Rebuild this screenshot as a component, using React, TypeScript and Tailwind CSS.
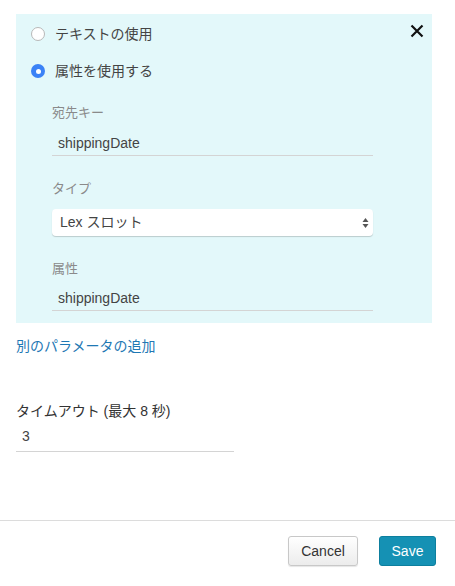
import React, { useState } from "react";

const font = { fontFamily: '"Liberation Sans", "Noto Sans CJK JP", sans-serif' };

function Radio({ checked }: { checked: boolean }) {
  return checked ? (
    <span className="flex h-[14px] w-[14px] items-center justify-center rounded-full bg-[#3b82f6]">
      <span className="h-[5px] w-[5px] rounded-full bg-white" />
    </span>
  ) : (
    <span className="h-[14px] w-[14px] rounded-full border border-[#b8b8b8] bg-white" />
  );
}

function Field({ label, value, gap }: { label: string; value: string; gap: string }) {
  return (
    <div className="flex flex-col">
      <span className="text-[13px] leading-[16px] text-[#8a8a8a]">{label}</span>
      <div className={`${gap} border-b border-[#d4d4d4] pb-[3px] pl-[6px] text-[14px] leading-[17px] text-[#444]`}>
        {value}
      </div>
    </div>
  );
}

export default function App() {
  const [mode, setMode] = useState<"text" | "attr">("attr");

  return (
    <div className="flex h-[586px] w-[455px] flex-col bg-white" style={font}>
      <div className="flex-1 px-4 pt-[14px]">
        <div className="relative w-[416px] bg-[#e3f8fa] pb-[12px] pl-[36px] pr-[59px] pt-[13px]">
          <button className="absolute right-[8px] top-[10px] text-[#111]">
            <svg width="14" height="14" viewBox="0 0 14 14" stroke="currentColor" strokeWidth="2.2">
              <path d="M1.5 1.5l11 11M12.5 1.5l-11 11" />
            </svg>
          </button>
          <div className="-ml-[21px] flex flex-col gap-[23px]">
            <label className="flex items-center gap-[10px] text-[14px] leading-[14px] text-[#444]" onClick={() => setMode("text")}>
              <Radio checked={mode === "text"} />
              テキストの使用
            </label>
            <label className="flex items-center gap-[10px] text-[14px] leading-[14px] text-[#444]" onClick={() => setMode("attr")}>
              <Radio checked={mode === "attr"} />
              属性を使用する
            </label>
          </div>
          <div className="mt-[27px] flex flex-col">
            <Field label="宛先キー" value="shippingDate" gap="mt-[14px]" />
            <span className="mt-[25px] text-[13px] leading-[16px] text-[#8a8a8a]">タイプ</span>
            <div className="mt-[12px] flex h-[27px] items-center justify-between rounded-[4px] bg-white pl-[8px] pr-[4px] text-[14px] text-[#444] shadow-[0_1px_1px_rgba(0,0,0,0.18)]">
              <span>Lex スロット</span>
              <svg width="7" height="12" viewBox="0 0 7 12" fill="#555">
                <path d="M3.5 1L6.5 5H0.5Z" />
                <path d="M3.5 11L6.5 7H0.5Z" />
              </svg>
            </div>
            <div className="mt-[25px]">
              <Field label="属性" value="shippingDate" gap="mt-[13px]" />
            </div>
          </div>
        </div>
        <a className="mt-[15px] block text-[14px] leading-[17px] text-[#1f78b4]" href="#">
          別のパラメータの追加
        </a>
        <div className="mt-[48px] text-[14px] leading-[17px] text-[#333]">タイムアウト (最大 8 秒)</div>
        <div className="mt-[8px] w-[218px] border-b border-[#d4d4d4] pb-[6px] pl-[6px] text-[14px] leading-[17px] text-[#444]">
          3
        </div>
      </div>
      <div className="flex h-[66px] items-start justify-end gap-[21px] border-t border-[#dcdcdc] pr-[19px] pt-[15px]">
        <button className="h-[30px] w-[70px] rounded-[3px] border border-[#c8c8c8] bg-gradient-to-b from-white to-[#ececec] text-[14px] text-[#333] shadow-[0_1px_1px_rgba(0,0,0,0.1)]">
          Cancel
        </button>
        <button className="h-[30px] w-[57px] rounded-[3px] border border-[#0d7f9e] bg-[#1591b4] text-[14px] text-white">
          Save
        </button>
      </div>
    </div>
  );
}
